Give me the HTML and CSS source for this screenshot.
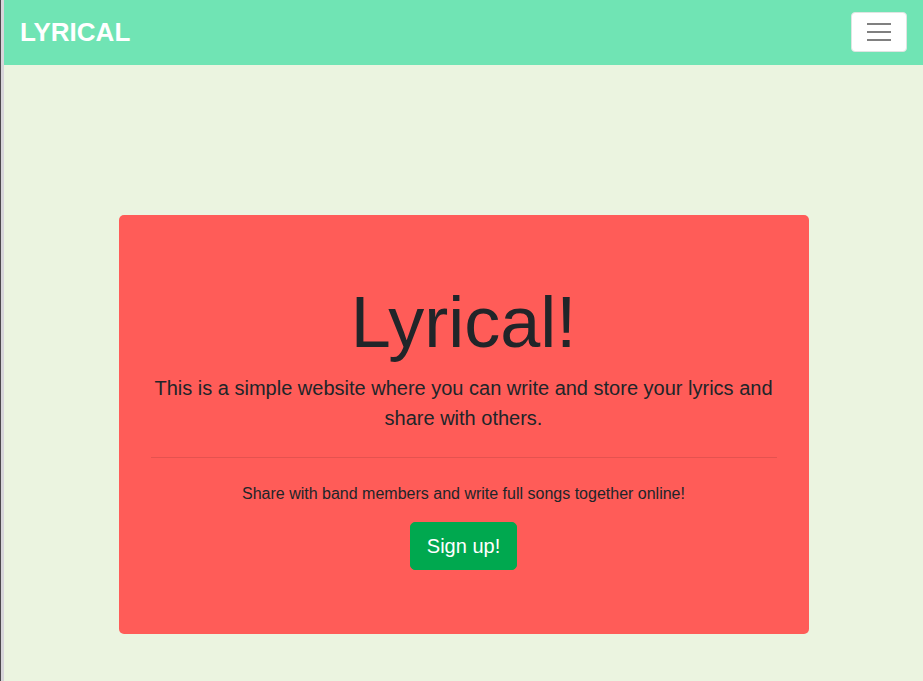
FILE: index.html
```
<!DOCTYPE html>
<html lang="en">
<head>
<meta charset="utf-8">
<title>Lyrical</title>
<meta name="viewport" content="width=device-width, initial-scale=1">
<link rel="stylesheet" href="styles.css">
</head>
<body>
<header class="navbar">
  <a class="brand" href="#">LYRICAL</a>
  <button class="toggler" type="button" aria-label="Toggle navigation">
    <svg class="toggler-icon" viewBox="0 0 30 30" aria-hidden="true"><path d="M3 7h24M3 15h24M3 23h24" stroke="#808080" stroke-width="2"/></svg>
  </button>
</header>
<main class="container">
  <section class="jumbotron">
    <h1 class="title">Lyrical!</h1>
    <p class="lead">This is a simple website where you can write and store your lyrics and share with others.</p>
    <hr class="rule">
    <p class="note">Share with band members and write full songs together online!</p>
    <a class="btn" href="#">Sign up!</a>
  </section>
</main>
</body>
</html>
```
FILE: styles.css
```
* {
  box-sizing: border-box;
}

html {
  border-left: 1px solid #4b484c;
}

body {
  margin: 0;
  min-height: 100vh;
  border-left: 3px solid #d7d5da;
  background: #ebf4e0;
  color: #212529;
  font: 16px/24px "Liberation Sans", Arial, sans-serif;
}

.navbar {
  display: flex;
  align-items: center;
  justify-content: space-between;
  padding: 12px 16px;
  border-bottom: 1px solid #70e4b4;
  background: #70e4b4;
}

.brand {
  color: #fff;
  font-size: 26px;
  font-weight: 700;
  line-height: 40px;
  text-decoration: none;
}

.toggler {
  display: flex;
  padding: 4px 12px;
  border: 1px solid #dfe5e2;
  border-radius: 4px;
  background: #fff;
}

.toggler-icon {
  width: 30px;
  height: 30px;
}

.container {
  max-width: 720px;
  margin: 150px auto 0;
  padding: 0 15px;
}

.jumbotron {
  padding: 64px 32px;
  border-radius: 5px;
  background: #ff5c58;
  text-align: center;
}

.title {
  margin: 0 0 8px;
  font-size: 72px;
  font-weight: 400;
  line-height: 86px;
}

.lead {
  margin: 0 0 16px;
  font-size: 20px;
  line-height: 30px;
}

.rule {
  margin: 24px 0;
  border: 0;
  border-top: 1px solid rgba(0, 0, 0, 0.1);
}

.note {
  margin: 0 0 16px;
}

.btn {
  display: inline-block;
  padding: 8px 16px;
  border: 1px solid #00a84f;
  border-radius: 5px;
  background: #00a84f;
  color: #fff;
  font-size: 20px;
  line-height: 30px;
  text-decoration: none;
}
```
